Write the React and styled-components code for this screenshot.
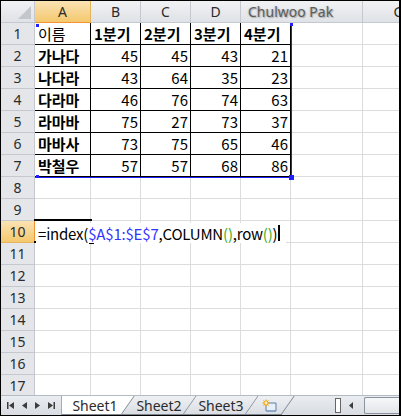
import React from "react";
import styled, { createGlobalStyle, css } from "styled-components";

const Global = createGlobalStyle`
  html, body { margin: 0; padding: 0; background: #fff; }
  body { font-family: "Noto Sans CJK KR", "Noto Sans", sans-serif; }
`;

const headerBg = "linear-gradient(#f1f2f4, #dfe2e6)";

const Window = styled.div`
  width: 401px;
  height: 416px;
  box-sizing: border-box;
  border: 1px solid #000;
  border-right-width: 2px;
  display: flex;
  flex-direction: column;
  overflow: hidden;
  position: relative;
  background: #fff;
`;

const Sheet = styled.div`
  flex: 1;
  display: grid;
  grid-template-columns: 34px 56px 50px 50px 50px 50px 72px 72px;
  grid-auto-rows: 22px;
  overflow: hidden;
  position: relative;
`;

const Corner = styled.div`
  box-sizing: border-box;
  background: ${headerBg};
  border-right: 1px solid #c5c9cf;
  border-bottom: 1px solid #c5c9cf;
  position: relative;
  &::after {
    content: "";
    position: absolute;
    right: 3px;
    bottom: 3px;
    width: 0;
    height: 0;
    border-left: 13px solid transparent;
    border-bottom: 13px solid #c3c7cc;
  }
`;

const ColHead = styled.div`
  box-sizing: border-box;
  display: flex;
  align-items: center;
  justify-content: center;
  font-family: "Noto Sans", sans-serif;
  font-size: 14px;
  color: #2b2b2b;
  background: ${headerBg};
  border-right: 1px solid #c5c9cf;
  border-bottom: 1px solid #c5c9cf;
  ${(p) =>
    p.$active &&
    css`
      background: linear-gradient(#fae3b4, #f4c86e);
      border-right-color: #e4b35a;
      border-bottom: 1px solid #f29436;
    `}
`;

const RowHead = styled.div`
  box-sizing: border-box;
  display: flex;
  align-items: center;
  justify-content: center;
  font-family: "Noto Sans", sans-serif;
  font-size: 14px;
  color: #2b2b2b;
  background: #e4e6e9;
  border-right: 1px solid #c5c9cf;
  border-bottom: 1px solid #c5c9cf;
  ${(p) =>
    p.$active &&
    css`
      background: linear-gradient(#fae3b4, #f4c86e);
      border-right: 1px solid #f29436;
      border-bottom-color: #e4b35a;
    `}
`;

const Cell = styled.div`
  box-sizing: border-box;
  display: flex;
  align-items: center;
  justify-content: ${(p) => (p.$num ? "flex-end" : "flex-start")};
  padding: 0 2px 0 3px;
  font-family: "Noto Sans CJK KR", sans-serif;
  font-size: 15px;
  font-weight: ${(p) => (p.$bold ? 700 : 400)};
  color: #000;
  white-space: nowrap;
  border-right: 1px solid ${(p) => (p.$boxed ? "#000" : "#dadcdd")};
  border-bottom: 1px solid ${(p) => (p.$boxed ? "#000" : "#dadcdd")};
  position: relative;
`;

const RangeMark = styled.div`
  position: absolute;
  left: 34px;
  top: 22px;
  width: 257px;
  height: 155px;
  box-sizing: border-box;
  border-right: 1px solid #1f1fff;
  border-bottom: 1px solid #1f1fff;
  pointer-events: none;
  z-index: 2;
`;

const Handle = styled.span`
  position: absolute;
  background: #1f1fff;
  width: ${(p) => p.$size}px;
  height: ${(p) => p.$size}px;
  ${(p) => p.$pos}
`;

const Editor = styled.div`
  position: absolute;
  left: -1px;
  top: -2px;
  height: 24px;
  width: 58px;
  box-sizing: border-box;
  border-top: 2px solid #000;
  border-bottom: 2px solid #000;
  z-index: 3;
`;

const EditorText = styled.div`
  position: absolute;
  left: 2px;
  top: 2px;
  height: 20px;
  width: 248px;
  background: #fff;
  display: flex;
  align-items: center;
  padding-left: 2px;
  font-family: "Noto Sans CJK KR", sans-serif;
  font-size: 15px;
  letter-spacing: -0.2px;
  white-space: nowrap;
  color: #000;
  z-index: 4;
`;

const Ref = styled.span`
  color: #3333ff;
`;

const Paren = styled.span`
  color: #44aa22;
`;

const Caret = styled.span`
  display: inline-block;
  width: 2px;
  height: 16px;
  background: #000;
  margin-left: 1px;
`;

const FillHandle = styled.span`
  position: absolute;
  right: -2px;
  bottom: -3px;
  width: 5px;
  height: 4px;
  background: #000;
`;

const Watermark = styled.div`
  position: absolute;
  left: 242px;
  top: 0;
  width: 119px;
  height: 21px;
  box-sizing: border-box;
  padding-left: 5px;
  display: flex;
  align-items: center;
  background: ${headerBg};
  font-family: "Noto Sans", sans-serif;
  font-size: 14px;
  color: #5c5c5c;
  text-shadow: 1px 1px 1px #b0b0b0, -1px 0 1px #c8c8c8;
  z-index: 5;
  pointer-events: none;
`;

const TabBar = styled.div`
  height: 19px;
  flex: none;
  display: flex;
  align-items: stretch;
  background: linear-gradient(#e9ecf0, #d9dde3);
  border-top: 1px solid #b4bbc3;
`;

const Nav = styled.div`
  width: 61px;
  flex: none;
  display: flex;
  align-items: center;
  justify-content: space-around;
  padding: 0 3px;
  box-sizing: border-box;
  border-right: 1px solid #a4abb4;
`;

const Tabs = styled.div`
  display: flex;
  align-items: stretch;
  flex: 1;
  overflow: hidden;
  position: relative;
`;

const Tab = styled.div`
  position: relative;
  flex: none;
  display: flex;
  align-items: center;
  justify-content: center;
  width: ${(p) => p.$w}px;
  font-family: "Noto Sans", sans-serif;
  font-size: 14px;
  color: #2b2b2b;
  z-index: ${(p) => (p.$active ? 2 : 1)};
  &::before {
    content: "";
    position: absolute;
    top: 0;
    bottom: 0;
    left: ${(p) => (p.$active ? "-16px" : "0")};
    right: 0;
    transform: skewX(-35deg);
    background: ${(p) => (p.$active ? "#ffffff" : "linear-gradient(#eef0f3, #dadee4)")};
    border-right: 1px solid #7f8791;
    border-bottom: 1px solid #7f8791;
    z-index: -1;
  }
`;

const Scroll = styled.div`
  display: flex;
  align-items: center;
  gap: 6px;
  flex: none;
`;

const Splitter = styled.div`
  width: 4px;
  height: 13px;
  background: #fff;
  border: 1px solid #666;
`;

const Thumb = styled.div`
  width: 34px;
  height: 15px;
  border: 1px solid #8b939c;
  border-right: none;
  border-radius: 2px 0 0 2px;
  background: linear-gradient(#f6f7f9, #e2e5e9);
  margin-left: 2px;
`;

const Glyph = ({ d }) => (
  <svg width="9" height="9" viewBox="0 0 9 9">
    <path d={d} fill="#3d3d3d" />
  </svg>
);

const NewSheetIcon = () => (
  <svg width="16" height="14" viewBox="0 0 16 14">
    <path d="M4 4h10v8H4z" fill="#e8eef6" stroke="#5b7fa8" />
    <path d="M5 12h9" stroke="#7fa0c6" />
    <circle cx="4" cy="4" r="2.6" fill="#f4b23a" />
    <path d="M4 0.5v7M0.5 4h7M1.5 1.5l5 5M6.5 1.5l-5 5" stroke="#f4a41d" strokeWidth="1" />
    <circle cx="4" cy="4" r="1.4" fill="#fff3c6" />
  </svg>
);

// E and F labels sit under the name overlay, so they are left blank
const cols = ["A", "B", "C", "D", "E", "F", "G"];
const hidden = ["E", "F"];

const data = [
  ["이름", "1분기", "2분기", "3분기", "4분기"],
  ["가나다", 45, 45, 43, 21],
  ["나다라", 43, 64, 35, 23],
  ["다라마", 46, 76, 74, 63],
  ["라마바", 75, 27, 73, 37],
  ["마바사", 73, 75, 65, 46],
  ["박철우", 57, 57, 68, 86],
];

export default function App() {
  const rows = [];
  for (let r = 1; r <= 17; r++) {
    rows.push(
      <RowHead key={`h${r}`} $active={r === 10}>
        {r}
      </RowHead>
    );
    cols.forEach((c, ci) => {
      const inTable = r <= 7 && ci < 5;
      const v = inTable ? data[r - 1][ci] : "";
      const num = typeof v === "number";
      const bold = inTable && ((r === 1 && ci > 0) || (r > 1 && ci === 0));
      rows.push(
        <Cell key={`${c}${r}`} $boxed={inTable} $num={num} $bold={bold}>
          {v}
          {r === 10 && ci === 0 && (
            <Editor>
              <EditorText>
                =index(<Ref>$A$1:$E$7</Ref>,COLUMN<Paren>()</Paren>,row<Paren>()</Paren>)
                <Caret />
              </EditorText>
              <FillHandle />
            </Editor>
          )}
        </Cell>
      );
    });
  }

  return (
    <>
      <Global />
      <Window>
        <Sheet>
          <Corner />
          {cols.map((c) => (
            <ColHead key={c} $active={c === "A"}>
              {hidden.includes(c) ? "" : c}
            </ColHead>
          ))}
          {rows}
          <RangeMark>
            <Handle $size={3} $pos="left: 1px; top: 1px;" />
            <Handle $size={3} $pos="right: -2px; top: 0;" />
            <Handle $size={3} $pos="left: 1px; bottom: -1px;" />
            <Handle $size={5} $pos="right: -3px; bottom: -3px;" />
          </RangeMark>
          <Watermark>Chulwoo Pak</Watermark>
        </Sheet>
        <TabBar>
          <Nav>
            <Glyph d="M1 1h1.5v7H1zM8 1v7L3 4.5z" />
            <Glyph d="M7 1v7L2 4.5z" />
            <Glyph d="M2 1v7l5-3.5z" />
            <Glyph d="M1 1v7l5-3.5zM6.5 1H8v7H6.5z" />
          </Nav>
          <Tabs>
            <Tab $active $w={66}>Sheet1</Tab>
            <Tab $w={62}>Sheet2</Tab>
            <Tab $w={62}>Sheet3</Tab>
            <Tab $w={36}>
              <NewSheetIcon />
            </Tab>
          </Tabs>
          <Scroll>
            <Splitter />
            <Glyph d="M6 1v7L2 4.5z" />
            <Thumb />
          </Scroll>
        </TabBar>
      </Window>
    </>
  );
}
